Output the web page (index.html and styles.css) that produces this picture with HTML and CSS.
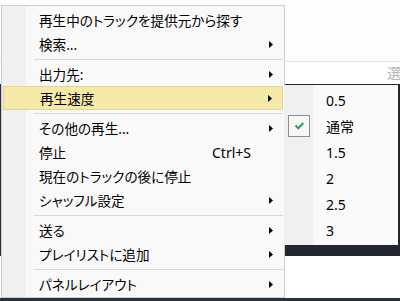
FILE: index.html
```html
<!DOCTYPE html>
<html lang="ja">
<head>
<meta charset="utf-8">
<link rel="stylesheet" href="styles.css">
</head>
<body>
<div class="app">
  <div class="app-top">
    <div class="app-toolbar"></div>
    <div class="app-filter"><span class="hint">選</span></div>
  </div>
  <div class="app-mid">
    <div class="app-left"></div>
    <div class="app-dark"></div>
  </div>
  <div class="app-bottom"></div>
  <div class="app-status"></div>
</div>

<div class="menu main-menu">
  <div class="item"><span class="label">再生中のトラックを提供元から探す</span><span class="sub"></span></div>
  <div class="item"><span class="label">検索...</span><span class="sub"><svg width="4" height="7" viewBox="0 0 4 7"><path d="M0 0L4 3.5L0 7Z"/></svg></span></div>
  <div class="sep"></div>
  <div class="item"><span class="label">出力先:</span><span class="sub"><svg width="4" height="7" viewBox="0 0 4 7"><path d="M0 0L4 3.5L0 7Z"/></svg></span></div>
  <div class="item active"><span class="label">再生速度</span><span class="sub"><svg width="4" height="7" viewBox="0 0 4 7"><path d="M0 0L4 3.5L0 7Z"/></svg></span></div>
  <div class="sep"></div>
  <div class="item"><span class="label">その他の再生...</span><span class="sub"><svg width="4" height="7" viewBox="0 0 4 7"><path d="M0 0L4 3.5L0 7Z"/></svg></span></div>
  <div class="item"><span class="label">停止</span><span class="shortcut">Ctrl+S</span><span class="sub"></span></div>
  <div class="item"><span class="label">現在のトラックの後に停止</span><span class="sub"></span></div>
  <div class="item"><span class="label">シャッフル設定</span><span class="sub"><svg width="4" height="7" viewBox="0 0 4 7"><path d="M0 0L4 3.5L0 7Z"/></svg></span></div>
  <div class="sep"></div>
  <div class="item"><span class="label">送る</span><span class="sub"><svg width="4" height="7" viewBox="0 0 4 7"><path d="M0 0L4 3.5L0 7Z"/></svg></span></div>
  <div class="item"><span class="label">プレイリストに追加</span><span class="sub"><svg width="4" height="7" viewBox="0 0 4 7"><path d="M0 0L4 3.5L0 7Z"/></svg></span></div>
  <div class="sep"></div>
  <div class="item"><span class="label">パネルレイアウト</span><span class="sub"><svg width="4" height="7" viewBox="0 0 4 7"><path d="M0 0L4 3.5L0 7Z"/></svg></span></div>
</div>

<div class="menu sub-menu">
  <div class="sitem"><span class="check"></span><span class="label">0.5</span></div>
  <div class="sitem"><span class="check on"><svg width="20" height="20" viewBox="0 0 20 20"><path d="M6.5 9.5L9.3 12.3L14.3 7" fill="none" stroke="#2f9e5c" stroke-width="2"/></svg></span><span class="label">通常</span></div>
  <div class="sitem"><span class="check"></span><span class="label">1.5</span></div>
  <div class="sitem"><span class="check"></span><span class="label">2</span></div>
  <div class="sitem"><span class="check"></span><span class="label">2.5</span></div>
  <div class="sitem"><span class="check"></span><span class="label">3</span></div>
</div>
</body>
</html>
```

FILE: styles.css
```css
* { box-sizing: border-box; }
html, body {
  margin: 0;
  padding: 0;
  width: 400px;
  height: 301px;
  overflow: hidden;
  font-family: "Noto Sans", "Noto Sans CJK JP", sans-serif;
  font-size: 13.6px;
  font-feature-settings: "palt";
  color: #000;
}
body { position: relative; }

.app {
  display: flex;
  flex-direction: column;
  width: 400px;
  height: 301px;
  background: #fcfcfc;
}
.app-top { height: 84px; display: flex; flex-direction: column; }
.app-toolbar { height: 62px; border-bottom: 1px solid #e2e2e2; background: #fdfdfd; }
.app-filter {
  height: 22px;
  display: flex;
  justify-content: flex-end;
  align-items: center;
  background: #fff;
  overflow: hidden;
}
.hint { color: #b3b3b3; font-size: 14px; line-height: 14px; margin-right: -1px; }
.app-mid { height: 172px; display: flex; }
.app-left { width: 283px; background: #fff; border-left: 1px solid #2b3140; }
.app-dark { flex: 1; background: #22262e; }
.app-bottom { height: 42px; background: #fff; }
.app-status { height: 3px; background: #2a303b; }

.menu { position: absolute; }

.main-menu {
  left: 1px;
  top: 5px;
  width: 284px;
  border: 1px solid #cdcdcd;
  padding: 2px 0 1px;
  background: linear-gradient(to right, #f0f0f0 0 24px, #f9f9f9 24px);
  display: flex;
  flex-direction: column;
}
.item {
  height: 24px;
  display: flex;
  align-items: center;
  padding: 0 11px 0 37px;
  white-space: nowrap;
}
.item .label { flex: 1; }
.item .shortcut { margin-right: 18px; font-size: 14px; }
.item .sub { width: 4px; height: 7px; display: flex; }
.item .sub svg { display: block; fill: #000; }
.item.active {
  margin: 0 1px;
  padding: 0 10px 0 36px;
  background: #f6eaab;
  border: 1px solid #e6d58e;
}
.sep {
  height: 6px;
  margin: 0 1px 0 32px;
  background: linear-gradient(#d9d9d9, #d9d9d9) 0 3px / 100% 1px no-repeat;
}

.sub-menu {
  left: 284px;
  top: 85px;
  width: 114px;
  height: 160px;
  padding: 2px 0;
  background: linear-gradient(to right, #f0f0f0 0 29px, #fafafa 29px);
  display: flex;
  flex-direction: column;
}
.sitem {
  height: 26px;
  display: flex;
  align-items: center;
  padding-left: 4px;
  font-size: 14px;
}
.check {
  width: 22px;
  height: 22px;
  margin-right: 16px;
  flex: none;
  display: flex;
  align-items: center;
  justify-content: center;
}
.check.on { border: 1px solid #8e8e8e; background: #f7f7f7; }
.check svg { display: block; }
```
